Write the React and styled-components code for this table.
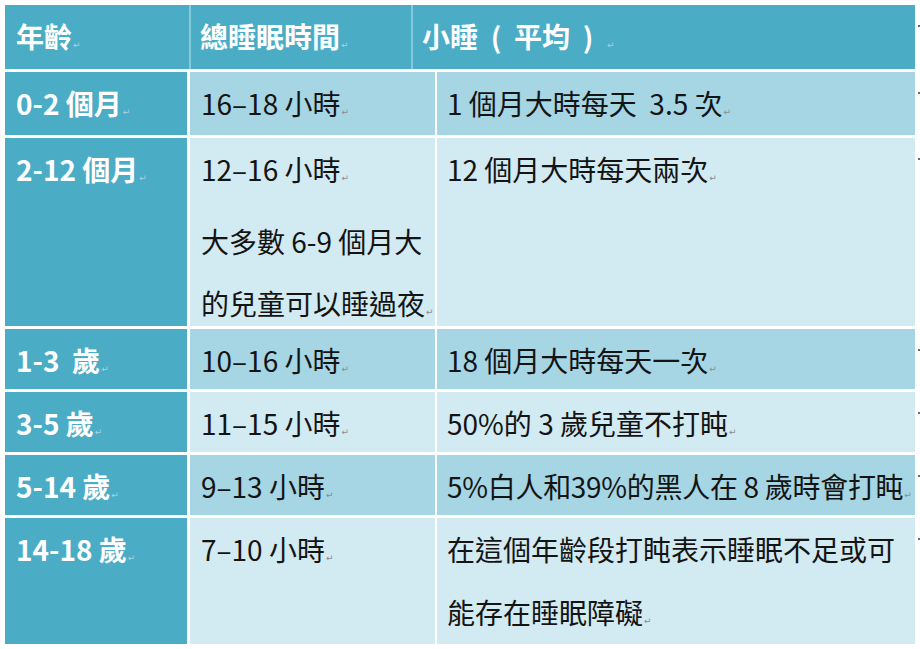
import React from 'react';
import styled, { createGlobalStyle } from 'styled-components';

const GlobalStyle = createGlobalStyle`
  body {
    margin: 0;
    background: #ffffff;
    font-family: "Noto Sans CJK TC", "Noto Sans", sans-serif;
  }
`;

const Page = styled.div`
  padding: 5px 0 0 5px;
  width: 920px;
  height: 649px;
  box-sizing: border-box;
  overflow: hidden;
`;

const Table = styled.div`
  display: flex;
  flex-direction: column;
  gap: 3px;
  width: 910px;
`;

const Row = styled.div`
  position: relative;
  display: flex;
  height: ${(p) => p.height}px;
  background: ${(p) => (p.header ? '#4bacc6' : '#ffffff')};
`;

const EndMark = styled.span`
  position: absolute;
  right: -5px;
  top: 20px;
  width: 2px;
  height: 2px;
  background: #6a6a6a;
`;

const Cell = styled.div`
  box-sizing: border-box;
  width: ${(p) => p.width}px;
  margin-left: ${(p) => p.gap || 0}px;
  padding-left: ${(p) => p.pad || 11}px;
  font-size: 28px;
  line-height: 62.5px;
  white-space: pre;
  color: ${(p) => (p.light ? '#ffffff' : '#141414')};
  font-weight: ${(p) => (p.light ? 700 : 400)};
  background: ${(p) => p.bg};
  border-left: ${(p) => (p.divider ? '2px solid #86c9db' : 'none')};
`;

const Line = styled.div`
  letter-spacing: ${(p) => p.tight || 0}px;
`;

const Ret = styled.span`
  font-size: 9px;
  font-weight: 400;
  margin-left: 1px;
  letter-spacing: 0;
  color: ${(p) => (p.light ? '#a9d3df' : '#8c8c8c')};
  font-family: "DejaVu Sans", sans-serif;
`;

const HEAD = '#4bacc6';
const DARK = '#a6d5e3';
const LIGHT = '#d2eaf1';

// a trailing '|' marks a line that ends with a paragraph mark
const rows = [
  { age: '0-2 個月|', total: ['16–18 小時|'], nap: ['1 個月大時每天  3.5 次|'], h: 63, bg: DARK },
  {
    age: '2-12 個月|',
    total: ['12–16 小時|', '大多數 6-9 個月大', '的兒童可以睡過夜|'],
    nap: ['12 個月大時每天兩次|'],
    h: 188,
    bg: LIGHT,
  },
  { age: '1-3  歲|', total: ['10–16 小時|'], nap: ['18 個月大時每天一次|'], h: 60, bg: DARK },
  { age: '3-5 歲|', total: ['11–15 小時|'], nap: ['50%的 3 歲兒童不打盹|'], h: 60, bg: LIGHT },
  {
    age: '5-14 歲|',
    total: ['9–13 小時|'],
    nap: ['5%白人和39%的黑人在 8 歲時會打盹|'],
    tight: -0.3,
    h: 60,
    bg: DARK,
  },
  {
    age: '14-18 歲|',
    total: ['7–10 小時|'],
    nap: ['在這個年齡段打盹表示睡眠不足或可', '能存在睡眠障礙|'],
    h: 126,
    bg: LIGHT,
  },
];

function Lines({ items, light, tight }) {
  return items.map((t, i) => {
    const mark = t.endsWith('|');
    return (
      <Line key={i} tight={tight}>
        {mark ? t.slice(0, -1) : t}
        {mark && <Ret light={light}>↵</Ret>}
      </Line>
    );
  });
}

export default function App() {
  return (
    <Page>
      <GlobalStyle />
      <Table>
        <Row header height={64}>
          <Cell width={184} bg={HEAD} light>
            <Lines items={['年齡|']} light />
          </Cell>
          <Cell width={222} bg={HEAD} light divider pad={9}>
            <Lines items={['總睡眠時間|']} light />
          </Cell>
          <Cell width={504} bg={HEAD} light divider pad={9}>
            <Lines items={['小睡  (  平均  )  |']} light />
          </Cell>
          <EndMark />
        </Row>
        {rows.map((r) => (
          <Row key={r.age} height={r.h}>
            <Cell width={182} bg={HEAD} light>
              <Lines items={[r.age]} light />
            </Cell>
            <Cell width={245} gap={3} bg={r.bg}>
              <Lines items={r.total} />
            </Cell>
            <Cell width={478} gap={2} pad={10} bg={r.bg}>
              <Lines items={r.nap} tight={r.tight} />
            </Cell>
            <EndMark />
          </Row>
        ))}
      </Table>
    </Page>
  );
}
